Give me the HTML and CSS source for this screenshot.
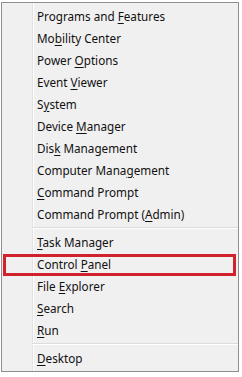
FILE: index.html
```html
<!DOCTYPE html>
<html lang="en">
<head>
    <meta charset="UTF-8">
    <title>Quick Link Menu</title>
    <link rel="stylesheet" href="styles.css">
</head>
<body>
<div class="menu">
    <ul>
        <li>Programs and <u>F</u>eatures</li>
        <li>Mo<u>b</u>ility Center</li>
        <li>Power <u>O</u>ptions</li>
        <li>Event <u>V</u>iewer</li>
        <li>S<u>y</u>stem</li>
        <li>Device <u>M</u>anager</li>
        <li>Dis<u>k</u> Management</li>
        <li>Computer Mana<u>g</u>ement</li>
        <li><u>C</u>ommand Prompt</li>
        <li>Command Prompt (<u>A</u>dmin)</li>
        <li class="sep"></li>
        <li><u>T</u>ask Manager</li>
        <li class="marked">Control <u>P</u>anel</li>
        <li>File <u>E</u>xplorer</li>
        <li><u>S</u>earch</li>
        <li><u>R</u>un</li>
        <li class="sep"></li>
        <li><u>D</u>esktop</li>
    </ul>
</div>
</body>
</html>
```

FILE: styles.css
```css
* {
    padding: 0;
    margin: 0;
    list-style: none;
}

body {
    background: #fff;
    padding: 2px 0 0 1px;
    font-family: "Noto Sans", "Open Sans", sans-serif;
    font-size: 11.7px;
    color: #111;
}

.menu {
    width: 236px;
    border: 1px solid #8f8f8f;
    padding: 2px 0;
    background: linear-gradient(to right, #f0f0f0 30px, #e2e2e2 30px, #e2e2e2 31px, #fff 31px, #fff 32px, #f0f0f0 32px);
}

.menu li {
    height: 22px;
    line-height: 22px;
    padding-left: 35px;
    white-space: nowrap;
}

.menu li u {
    text-underline-offset: 2px;
}

.menu li.sep {
    height: 0;
    margin: 2px 0 2px 30px;
    padding: 0;
    border-top: 1px solid #dcdcdc;
    border-bottom: 1px solid #fff;
}

.menu li.marked {
    position: relative;
}

/* red highlight frame */
.menu li.marked::after {
    content: "";
    position: absolute;
    left: 1px;
    right: 2px;
    top: 1px;
    bottom: -1px;
    border: 3px solid #d0212d;
}
```
